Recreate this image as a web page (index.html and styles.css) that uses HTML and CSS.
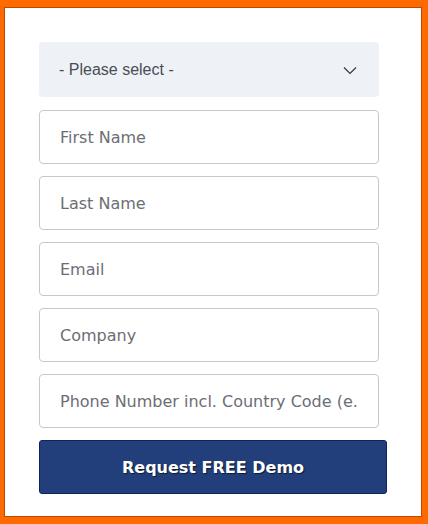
FILE: index.html
```html
<!DOCTYPE html>
<html>
<head>
<meta charset="utf-8">
<link rel="stylesheet" href="styles.css">
</head>
<body>
<div class="panel">
  <form class="form">
    <div class="select">
      <span class="select-text">- Please select -</span>
      <svg class="chev" width="14" height="9" viewBox="0 0 14 9"><path d="M1 1.5 L7 7.5 L13 1.5" fill="none" stroke="#333" stroke-width="1.1"/></svg>
    </div>
    <div class="field">First Name</div>
    <div class="field">Last Name</div>
    <div class="field">Email</div>
    <div class="field">Company</div>
    <div class="field">Phone Number incl. Country Code (e.</div>
    <div class="btn">Request FREE Demo</div>
  </form>
</div>
</body>
</html>
```
FILE: styles.css
```css
html, body { margin: 0; padding: 0; }
body {
  background: #ff6a00;
  width: 428px;
  height: 524px;
  overflow: hidden;
  padding: 7px 6px 6px 4px;
  box-sizing: border-box;
}
.panel {
  background: #fff;
  border: 1px solid #b84a08;
  height: 510px;
  box-sizing: border-box;
  padding: 34px 0 0 34px;
}
.form {
  display: flex;
  flex-direction: column;
  gap: 12px;
  width: 348px;
}
.select {
  width: 340px;
  height: 55px;
  margin-bottom: 1px;
  box-sizing: border-box;
  background: #eef1f5;
  border-radius: 4px;
  display: flex;
  align-items: center;
  justify-content: space-between;
  padding: 0 22px 0 20px;
  font-family: "Liberation Sans", Arial, sans-serif;
  font-size: 16px;
  color: #4a4d55;
}
.chev { margin-top: 1px; }
.field {
  width: 340px;
  height: 54px;
  box-sizing: border-box;
  border: 1px solid #c8c8c8;
  border-radius: 4px;
  padding: 0 20px;
  display: flex;
  align-items: center;
  font-family: "DejaVu Sans", sans-serif;
  font-size: 16px;
  color: #6b6e75;
  white-space: nowrap;
  overflow: hidden;
}
.btn {
  width: 348px;
  height: 54px;
  box-sizing: border-box;
  background: #223f7c;
  border: 1px solid #0f255a;
  border-radius: 3px;
  display: flex;
  align-items: center;
  justify-content: center;
  font-family: "DejaVu Sans", sans-serif;
  font-weight: bold;
  font-size: 16px;
  color: #fff;
  text-shadow: 1px 1px 1px rgba(0,0,0,0.6);
}
```
